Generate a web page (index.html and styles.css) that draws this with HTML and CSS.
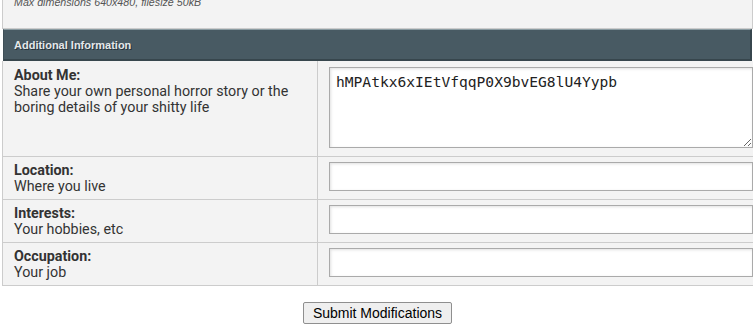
FILE: index.html
```html
<!DOCTYPE html>
<html>
<head>
  <title>Edit Profile</title>
  <meta name="viewport" content="width=device-width, initial-scale=1">
  <link rel="stylesheet" href="styles.css">
</head>
<body>
  <form class="profile">
    <div class="note-cell">
      <div class="note">Max dimensions 640x480, filesize 50kB</div>
    </div>
    <div class="section-header">Additional Information</div>
    <div class="fields">
      <div class="field field-tall">
        <div class="field-label">
          <b>About Me:</b>
          Share your own personal horror story or the boring details of your shitty life
        </div>
        <div class="field-input">
          <textarea class="textarea">hMPAtkx6xIEtVfqqP0X9bvEG8lU4Yypb</textarea>
        </div>
      </div>
      <div class="field">
        <div class="field-label">
          <b>Location:</b>
          Where you live
        </div>
        <div class="field-input"><input class="text" type="text"></div>
      </div>
      <div class="field">
        <div class="field-label">
          <b>Interests:</b>
          Your hobbies, etc
        </div>
        <div class="field-input"><input class="text" type="text"></div>
      </div>
      <div class="field">
        <div class="field-label">
          <b>Occupation:</b>
          Your job
        </div>
        <div class="field-input"><input class="text" type="text"></div>
      </div>
    </div>
    <div class="actions">
      <button class="submit" type="button">Submit Modifications</button>
    </div>
  </form>
</body>
</html>
```

FILE: styles.css
```css
html, body {
  margin: 0;
  padding: 0;
  background: #fff;
}
* {
  box-sizing: border-box;
}
.profile {
  width: 751px;
  margin: 0 0 0 2px;
}
.note-cell {
  height: 29px;
  background: #f3f3f3;
  border: 1px solid #ccc;
  border-top: 0;
  padding-left: 11px;
  overflow: hidden;
}
.note {
  margin-top: -4px;
  font-family: "Liberation Sans", Arial, sans-serif;
  font-style: italic;
  font-size: 10.7px;
  line-height: 12px;
  color: #555;
}
.section-header {
  height: 32px;
  margin-left: 1px;
  width: 749px;
  background: #485a63;
  border-top: 1px solid #8b9ca2;
  border-left: 1px solid #3f4f57;
  border-right: 2px solid #37464d;
  border-bottom: 2px solid #37464d;
  padding-left: 10px;
  font-family: "Liberation Sans", Arial, sans-serif;
  font-weight: bold;
  font-size: 11px;
  line-height: 30px;
  color: #e4e8ea;
  text-shadow: 1px 1px 0 #26323a;
}
.fields {
  background: #f3f3f3;
  border-left: 1px solid #ccc;
  font-family: Roboto, "Liberation Sans", sans-serif;
  font-size: 14.3px;
  line-height: 16px;
  color: #333;
}
.field {
  display: grid;
  grid-template-columns: 315px 1fr;
  border-bottom: 1px solid #ccc;
}
.field-label {
  border-right: 1px solid #ccc;
  padding: 5px 11px 5px 11px;
}
.field-label b {
  display: block;
  font-weight: bold;
}
.field-input {
  padding: 5px 0 8px 11px;
}
.field-tall .field-label,
.field-tall .field-input {
  padding-top: 6px;
}
.textarea,
.text {
  display: block;
  width: 100%;
  margin: 0;
  background: #fff;
  border: 1px solid #aaa;
  border-radius: 0;
  box-shadow: inset 1px 1px 3px rgba(0,0,0,.12);
  outline: none;
}
.textarea {
  height: 81px;
  padding: 5px 6px;
  font-family: "DejaVu Sans Mono", monospace;
  font-size: 14.6px;
  line-height: 17px;
  color: #222;
  resize: vertical;
}
.text {
  height: 29px;
}
.actions {
  padding-top: 16px;
  text-align: center;
}
.submit {
  width: 149px;
  height: 22px;
  padding: 0;
  background: #efefef;
  border: 1px solid #8f8f8f;
  border-radius: 2px;
  font-family: "Liberation Sans", Arial, sans-serif;
  font-size: 14px;
  color: #000;
}
```
